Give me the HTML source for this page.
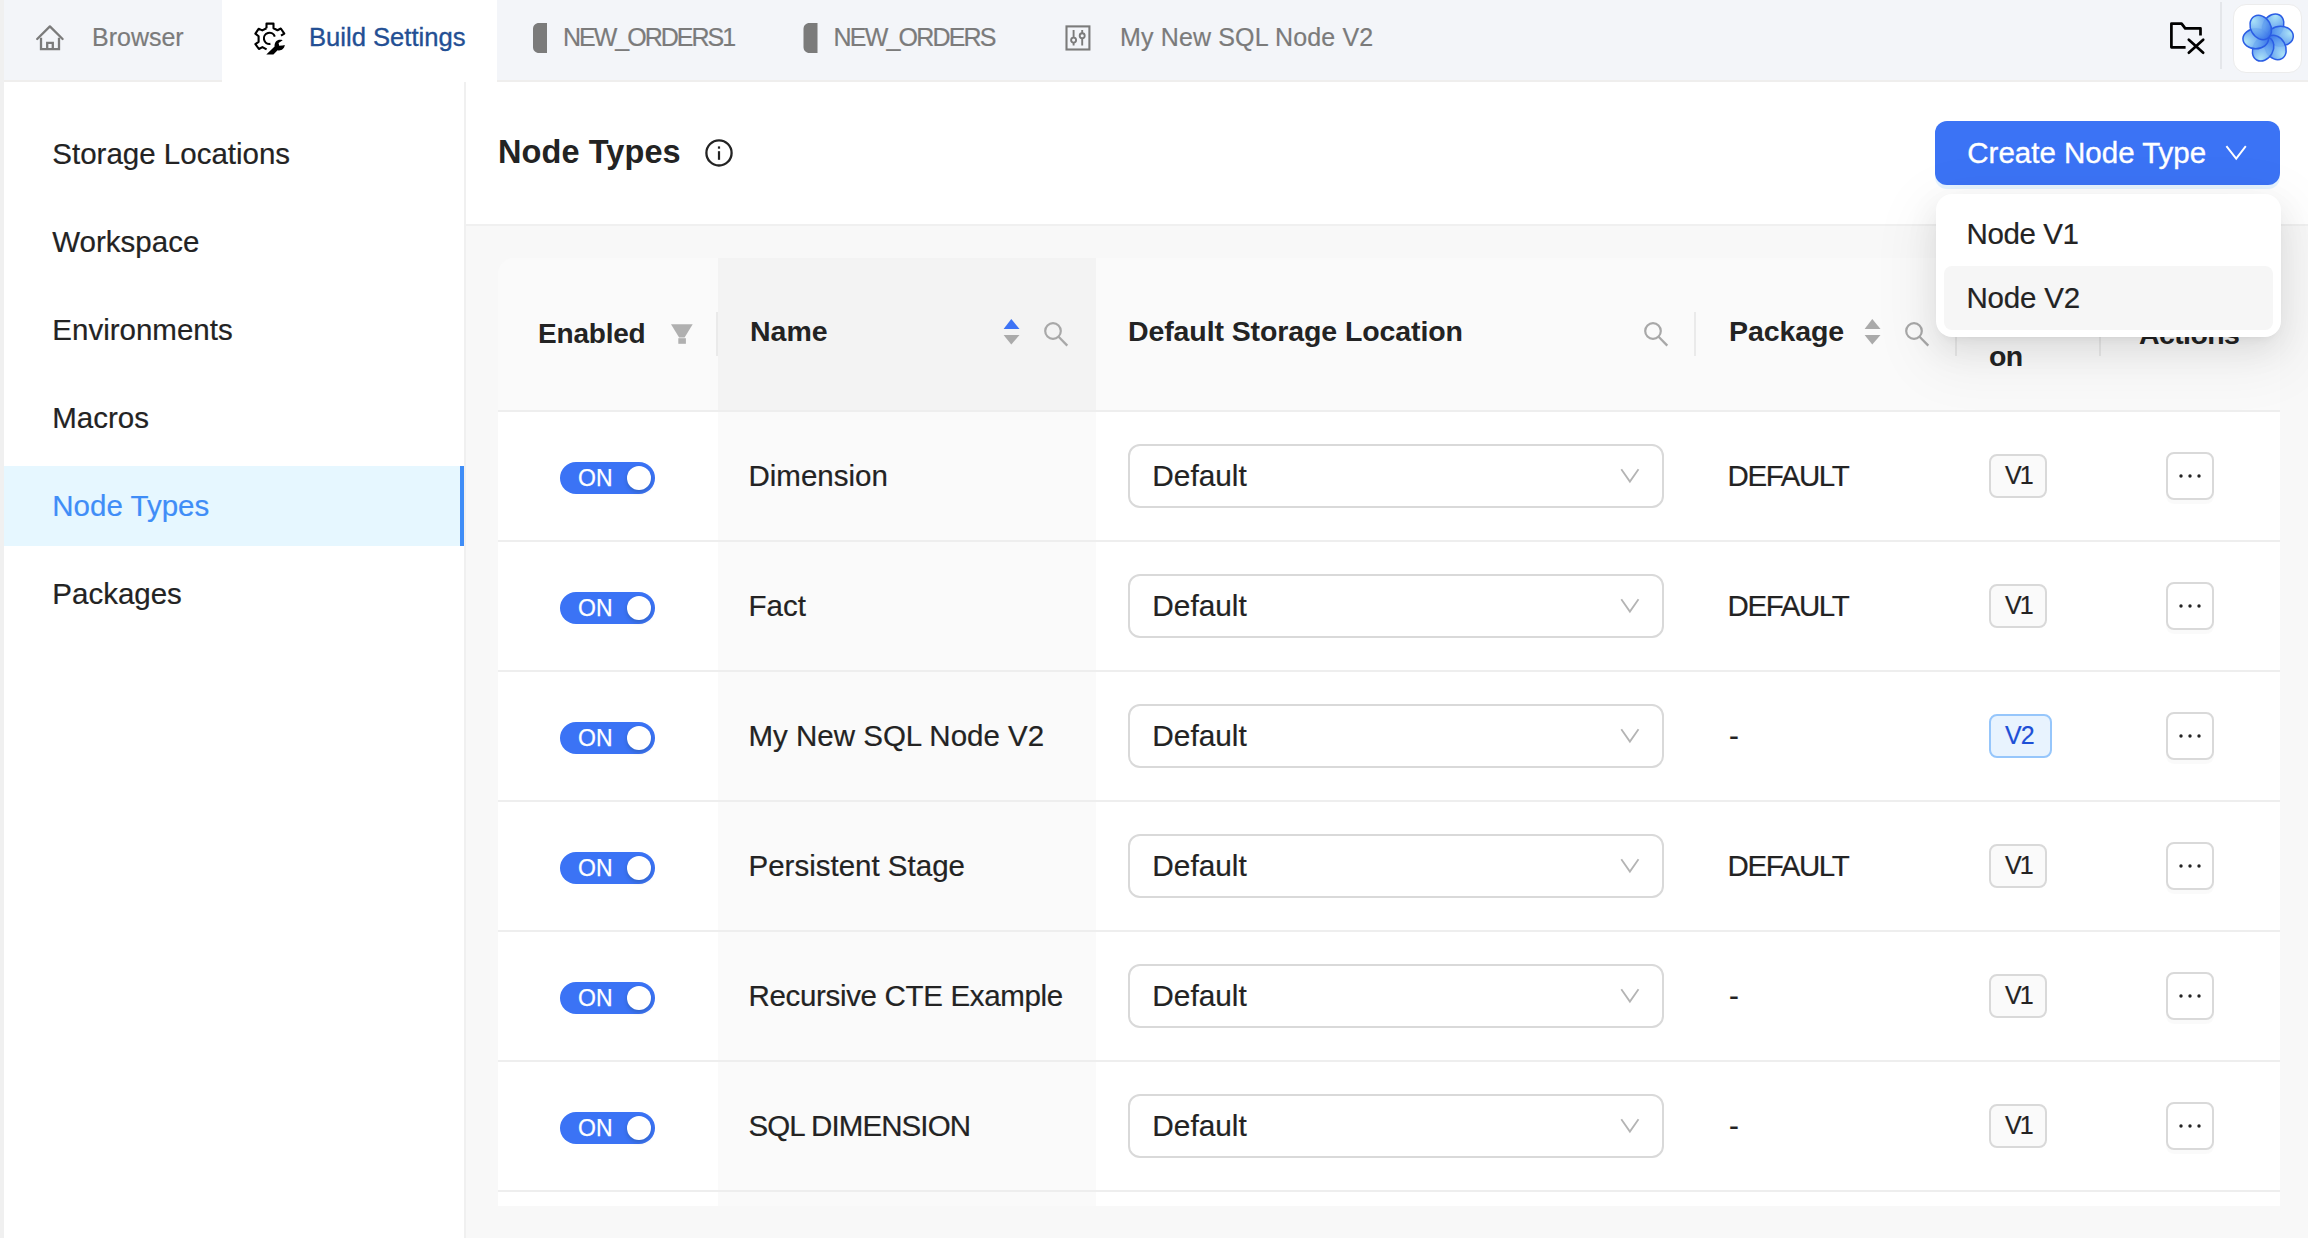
<!DOCTYPE html><html><head><meta charset="utf-8"><style>
html,body{margin:0;padding:0;}
body{width:2308px;height:1238px;overflow:hidden;position:relative;background:#fff;font-family:"Liberation Sans",sans-serif;}
.r{position:absolute;}
.t{position:absolute;white-space:nowrap;line-height:1;-webkit-text-stroke:0.2px currentColor;}
</style></head><body>
<div class="r" style="left:0px;top:0px;width:4px;height:1238px;background:#f0f0f0"></div>
<div class="r" style="left:4px;top:0px;width:2304px;height:80px;background:#f3f5f9"></div>
<div class="r" style="left:4px;top:80px;width:2304px;height:2px;background:#efeeed"></div>
<div class="r" style="left:222px;top:0px;width:275px;height:82px;background:#fff"></div>
<svg class="r" style="left:30px;top:18px;" width="40" height="40" viewBox="0 0 40 40"><path d="M7.2 21 L19.9 8.4 L32.6 21" fill="none" stroke="#7b7b7b" stroke-width="2.3" stroke-linecap="round" stroke-linejoin="round"/><path d="M11 19.8 V31.1 H29 V19.8" fill="none" stroke="#7b7b7b" stroke-width="2.3"/><path d="M17.2 31.1 V24.8 H22.8 V31.1" fill="none" stroke="#7b7b7b" stroke-width="2.3"/></svg>
<div class="t" style="left:92px;top:24.83px;font-size:25px;color:#7b7b7b;font-weight:400;letter-spacing:0px;">Browser</div>
<svg class="r" style="left:250px;top:18.6px;" width="40" height="40" viewBox="0 0 40 40"><path d="M16.5 9.2 V4.6 H23.5 V9.2 L27.5 11.2 L30.8 9.5 L34.3 14.6 L31.0 16.7" fill="none" stroke="#000" stroke-width="2.1" stroke-linejoin="round"/><path d="M16.5 9.2 L12.3 11.4 L8.6 9.8 L5.4 14.6 L8.6 17.3 V22.8 L5.4 25.2 L8.9 30.0 L12.4 28.1 L16.6 30.4" fill="none" stroke="#000" stroke-width="2.1" stroke-linejoin="round"/><path d="M24.8 17.6 A5.6 5.6 0 1 0 20.4 24.9" fill="none" stroke="#000" stroke-width="2.1"/><path d="M16.3 35.6 L24.6 27.4 C24.2 22.5 28.2 19.6 32.7 21.3 L28.6 24.0 L29.2 26.8 L32.6 26.6 L34.8 26.0 C34.2 30.5 30.6 32.0 27.6 31.2 L23.4 35.6 Z" fill="#000"/></svg>
<div class="t" style="left:309px;top:25.12px;font-size:25.6px;color:#234f94;font-weight:500;letter-spacing:0px;-webkit-text-stroke:0.35px #234f94;">Build Settings</div>
<svg class="r" style="left:530px;top:20px;" width="20" height="36" viewBox="0 0 20 36"><path d="M17 3 H9 C5.5 3 3 5.5 3 9 V27 C3 30.5 5.5 33 9 33 H17 Z" fill="#7b7b7b"/></svg>
<div class="t" style="left:563px;top:25.33px;font-size:25px;color:#7b7b7b;font-weight:400;letter-spacing:-2.0px;">NEW_ORDERS1</div>
<svg class="r" style="left:800px;top:20px;" width="20" height="36" viewBox="0 0 20 36"><path d="M17.5 3 H9.5 C6 3 3.5 5.5 3.5 9 V27 C3.5 30.5 6 33 9.5 33 H17.5 Z" fill="#7b7b7b"/></svg>
<div class="t" style="left:833.5px;top:25.33px;font-size:25px;color:#7b7b7b;font-weight:400;letter-spacing:-1.8px;">NEW_ORDERS</div>
<svg class="r" style="left:1062px;top:22px;" width="32" height="32" viewBox="0 0 32 32"><rect x="4.5" y="4.4" width="22.9" height="23.1" fill="none" stroke="#7b7b7b" stroke-width="2.1"/><path d="M11.6 8.1 V23.5 M20.2 8.1 V23.5" stroke="#7b7b7b" stroke-width="1.9"/><circle cx="11.6" cy="18.1" r="2.5" fill="#f3f5f9" stroke="#7b7b7b" stroke-width="1.9"/><circle cx="20.2" cy="13.7" r="2.5" fill="#f3f5f9" stroke="#7b7b7b" stroke-width="1.9"/></svg>
<div class="t" style="left:1120px;top:25.33px;font-size:25px;color:#7b7b7b;font-weight:400;letter-spacing:0.15px;">My New SQL Node V2</div>
<svg class="r" style="left:2166px;top:18px;" width="42" height="42" viewBox="0 0 42 42"><path d="M19.6 29.3 H5.4 V5.6 H15.6 L19.2 10.4 H34.5 V17.6" fill="none" stroke="#000" stroke-width="2.7" stroke-linejoin="round"/><path d="M22.8 21.7 L37.2 34.7 M37.2 21.7 L22.8 34.7" stroke="#000" stroke-width="2.7" stroke-linecap="round"/></svg>
<div class="r" style="left:2220px;top:2px;width:2px;height:67px;background:#e4e6ea"></div>
<div class="r" style="left:2233px;top:4px;width:69px;height:69px;background:#fff;border:1px solid #ececec;border-radius:13px;box-sizing:border-box"></div>
<svg class="r" style="left:2240px;top:8px;" width="56" height="58" viewBox="0 0 56 58"><defs><radialGradient id="lg" cx="0.35" cy="0.1" r="1.0"><stop offset="0" stop-color="#a6e2f7"/><stop offset="0.6" stop-color="#5e9cef"/><stop offset="1" stop-color="#2f68e6"/></radialGradient></defs><g transform="rotate(0 28.1 29.5)"><ellipse cx="33.1" cy="18.1" rx="10.0" ry="12.8" transform="rotate(30 33.1 18.1)" fill="url(#lg)" fill-opacity="0.93" stroke="#2b5de4" stroke-width="1.5"/></g><g transform="rotate(60 28.1 29.5)"><ellipse cx="33.1" cy="18.1" rx="10.0" ry="12.8" transform="rotate(30 33.1 18.1)" fill="url(#lg)" fill-opacity="0.93" stroke="#2b5de4" stroke-width="1.5"/></g><g transform="rotate(120 28.1 29.5)"><ellipse cx="33.1" cy="18.1" rx="10.0" ry="12.8" transform="rotate(30 33.1 18.1)" fill="url(#lg)" fill-opacity="0.93" stroke="#2b5de4" stroke-width="1.5"/></g><g transform="rotate(180 28.1 29.5)"><ellipse cx="33.1" cy="18.1" rx="10.0" ry="12.8" transform="rotate(30 33.1 18.1)" fill="url(#lg)" fill-opacity="0.93" stroke="#2b5de4" stroke-width="1.5"/></g><g transform="rotate(240 28.1 29.5)"><ellipse cx="33.1" cy="18.1" rx="10.0" ry="12.8" transform="rotate(30 33.1 18.1)" fill="url(#lg)" fill-opacity="0.93" stroke="#2b5de4" stroke-width="1.5"/></g><g transform="rotate(300 28.1 29.5)"><ellipse cx="33.1" cy="18.1" rx="10.0" ry="12.8" transform="rotate(30 33.1 18.1)" fill="url(#lg)" fill-opacity="0.93" stroke="#2b5de4" stroke-width="1.5"/></g></svg>
<div class="r" style="left:4px;top:82px;width:460px;height:1156px;background:#fff"></div>
<div class="r" style="left:464px;top:82px;width:2px;height:1156px;background:#f0f0f0"></div>
<div class="r" style="left:4px;top:466px;width:456px;height:80px;background:#e6f7ff"></div>
<div class="r" style="left:460px;top:466px;width:4px;height:80px;background:#3f8df7"></div>
<div class="t" style="left:52.3px;top:138.82px;font-size:29.5px;color:#232323;font-weight:400;letter-spacing:0px;">Storage Locations</div>
<div class="t" style="left:52.3px;top:226.82px;font-size:29.5px;color:#232323;font-weight:400;letter-spacing:0px;">Workspace</div>
<div class="t" style="left:52.3px;top:314.82px;font-size:29.5px;color:#232323;font-weight:400;letter-spacing:0px;">Environments</div>
<div class="t" style="left:52.3px;top:402.82px;font-size:29.5px;color:#232323;font-weight:400;letter-spacing:0px;">Macros</div>
<div class="t" style="left:52.3px;top:490.82px;font-size:29.5px;color:#3f8df7;font-weight:400;letter-spacing:0px;">Node Types</div>
<div class="t" style="left:52.3px;top:578.82px;font-size:29.5px;color:#232323;font-weight:400;letter-spacing:0px;">Packages</div>
<div class="r" style="left:466px;top:82px;width:1842px;height:142px;background:#fff"></div>
<div class="r" style="left:466px;top:224px;width:1842px;height:2px;background:#f0f0f0"></div>
<div class="r" style="left:466px;top:226px;width:1842px;height:1012px;background:#f8f8f8"></div>
<div class="t" style="left:498px;top:136.38px;font-size:32.5px;color:#232323;font-weight:700;letter-spacing:0.1px;-webkit-text-stroke:0;">Node Types</div>
<svg class="r" style="left:702px;top:137px;" width="32" height="32" viewBox="0 0 32 32"><circle cx="17" cy="15.9" r="12.6" fill="none" stroke="#232323" stroke-width="2.3"/><rect x="15.9" y="14.2" width="2.2" height="8.6" fill="#232323"/><rect x="15.9" y="9.4" width="2.2" height="2.3" fill="#232323"/></svg>
<div class="r" style="left:498px;top:258px;width:1782px;height:152px;background:#fafafa;border-radius:16px 16px 0 0"></div>
<div class="r" style="left:718px;top:258px;width:378px;height:152px;background:#f3f3f3"></div>
<div class="r" style="left:498px;top:410px;width:1782px;height:2px;background:#eeeeee"></div>
<div class="r" style="left:716px;top:312px;width:2px;height:44px;background:#eaeaea"></div>
<div class="r" style="left:1694px;top:312px;width:2px;height:44px;background:#eaeaea"></div>
<div class="r" style="left:1955px;top:312px;width:2px;height:44px;background:#eaeaea"></div>
<div class="r" style="left:2099px;top:312px;width:2px;height:44px;background:#eaeaea"></div>
<div class="t" style="left:538px;top:320.29px;font-size:28px;color:#232323;font-weight:700;letter-spacing:-0.2px;-webkit-text-stroke:0;">Enabled</div>
<svg class="r" style="left:668px;top:321px;" width="28" height="26" viewBox="0 0 28 26"><path d="M3 3.3 H24.7 L16.6 16.4 H11.1 Z" fill="#b0b0b0"/><rect x="10.3" y="17.2" width="7.6" height="5.6" fill="#b0b0b0"/></svg>
<div class="t" style="left:750px;top:317.47px;font-size:28.5px;color:#232323;font-weight:700;letter-spacing:0px;-webkit-text-stroke:0;">Name</div>
<svg class="r" style="left:1001px;top:316px;" width="20" height="32" viewBox="0 0 20 32"><path d="M2.6 13 L10.3 3 L18.5 13 Z" fill="#3d73f5"/><path d="M2.6 19 L18.5 19 L10.3 28.5 Z" fill="#aaaaaa"/></svg>
<svg class="r" style="left:1039px;top:316.7px;" width="30" height="32" viewBox="0 0 30 32"><circle cx="14" cy="14" r="7.8" fill="none" stroke="#a8a8a8" stroke-width="2.2"/><path d="M19.6 19.8 L28.3 28.6" stroke="#a8a8a8" stroke-width="2.3"/></svg>
<div class="t" style="left:1128px;top:317.37px;font-size:28.5px;color:#232323;font-weight:700;letter-spacing:-0.1px;-webkit-text-stroke:0;">Default Storage Location</div>
<svg class="r" style="left:1638.5px;top:316.7px;" width="30" height="32" viewBox="0 0 30 32"><circle cx="14" cy="14" r="7.8" fill="none" stroke="#a8a8a8" stroke-width="2.2"/><path d="M19.6 19.8 L28.3 28.6" stroke="#a8a8a8" stroke-width="2.3"/></svg>
<div class="t" style="left:1729px;top:317.37px;font-size:28.5px;color:#232323;font-weight:700;letter-spacing:-0.1px;-webkit-text-stroke:0;">Package</div>
<svg class="r" style="left:1862px;top:316px;" width="20" height="32" viewBox="0 0 20 32"><path d="M2.6 13 L10.3 3 L18.5 13 Z" fill="#aaaaaa"/><path d="M2.6 19 L18.5 19 L10.3 28.5 Z" fill="#aaaaaa"/></svg>
<svg class="r" style="left:1900px;top:316.7px;" width="30" height="32" viewBox="0 0 30 32"><circle cx="14" cy="14" r="7.8" fill="none" stroke="#a8a8a8" stroke-width="2.2"/><path d="M19.6 19.8 L28.3 28.6" stroke="#a8a8a8" stroke-width="2.3"/></svg>
<div class="t" style="left:1989px;top:342.17px;font-size:28.5px;color:#232323;font-weight:700;letter-spacing:-0.6px;-webkit-text-stroke:0;">on</div>
<div class="t" style="left:2139px;top:320.37px;font-size:28.5px;color:#232323;font-weight:700;letter-spacing:-0.6px;-webkit-text-stroke:0;">Actions</div>
<div class="r" style="left:498px;top:412px;width:1782px;height:128px;background:#fff"></div>
<div class="r" style="left:718px;top:412px;width:378px;height:128px;background:#fafafa"></div>
<div class="r" style="left:498px;top:540px;width:1782px;height:2px;background:#eeeeee"></div>
<div class="r" style="left:560px;top:462px;width:95px;height:32px;background:#3b73f5;border-radius:16px"></div>
<div class="t" style="left:578px;top:467.03px;font-size:23px;color:#fff;font-weight:400;letter-spacing:0px;-webkit-text-stroke:0.25px #fff;">ON</div>
<div class="r" style="left:627px;top:466px;width:24px;height:24px;background:#fff;border-radius:50%;box-shadow:0 2px 4px rgba(0,35,11,0.2)"></div>
<div class="t" style="left:748.5px;top:461.22px;font-size:29.5px;color:#232323;font-weight:400;letter-spacing:0px;">Dimension</div>
<div class="r" style="left:1128px;top:444px;width:536px;height:64px;background:#fff;border:2px solid #d9d9d9;border-radius:12px;box-sizing:border-box"></div>
<div class="t" style="left:1152.3px;top:460.77px;font-size:29.8px;color:#232323;font-weight:400;letter-spacing:0px;">Default</div>
<svg class="r" style="left:1616px;top:462px;" width="28" height="28" viewBox="0 0 28 28"><path d="M5.3 7.3 L13.9 19.6 L22.5 7.3" fill="none" stroke="#b4b4b4" stroke-width="1.8"/></svg>
<div class="t" style="left:1727.5px;top:461.02px;font-size:29.5px;color:#232323;font-weight:400;letter-spacing:-1.4px;">DEFAULT</div>
<div class="r" style="left:1989px;top:454px;width:58px;height:44px;background:#fafafa;border:2px solid #d9d9d9;border-radius:8px;box-sizing:border-box"></div>
<div class="t" style="left:2005px;top:463.33px;font-size:25px;color:#232323;font-weight:400;letter-spacing:-2px;">V1</div>
<div class="r" style="left:2166px;top:452px;width:48px;height:48px;background:#fff;border:2px solid #d9d9d9;border-radius:8px;box-sizing:border-box;box-shadow:0 4px 0 rgba(0,0,0,0.02)"></div>
<svg class="r" style="left:2176px;top:460px;" width="28" height="28" viewBox="0 0 28 28"><circle cx="5" cy="16" r="1.7" fill="#232323"/><circle cx="14" cy="16" r="1.7" fill="#232323"/><circle cx="23" cy="16" r="1.7" fill="#232323"/></svg>
<div class="r" style="left:498px;top:542px;width:1782px;height:128px;background:#fff"></div>
<div class="r" style="left:718px;top:542px;width:378px;height:128px;background:#fafafa"></div>
<div class="r" style="left:498px;top:670px;width:1782px;height:2px;background:#eeeeee"></div>
<div class="r" style="left:560px;top:592px;width:95px;height:32px;background:#3b73f5;border-radius:16px"></div>
<div class="t" style="left:578px;top:597.03px;font-size:23px;color:#fff;font-weight:400;letter-spacing:0px;-webkit-text-stroke:0.25px #fff;">ON</div>
<div class="r" style="left:627px;top:596px;width:24px;height:24px;background:#fff;border-radius:50%;box-shadow:0 2px 4px rgba(0,35,11,0.2)"></div>
<div class="t" style="left:748.5px;top:591.22px;font-size:29.5px;color:#232323;font-weight:400;letter-spacing:0px;">Fact</div>
<div class="r" style="left:1128px;top:574px;width:536px;height:64px;background:#fff;border:2px solid #d9d9d9;border-radius:12px;box-sizing:border-box"></div>
<div class="t" style="left:1152.3px;top:590.77px;font-size:29.8px;color:#232323;font-weight:400;letter-spacing:0px;">Default</div>
<svg class="r" style="left:1616px;top:592px;" width="28" height="28" viewBox="0 0 28 28"><path d="M5.3 7.3 L13.9 19.6 L22.5 7.3" fill="none" stroke="#b4b4b4" stroke-width="1.8"/></svg>
<div class="t" style="left:1727.5px;top:591.02px;font-size:29.5px;color:#232323;font-weight:400;letter-spacing:-1.4px;">DEFAULT</div>
<div class="r" style="left:1989px;top:584px;width:58px;height:44px;background:#fafafa;border:2px solid #d9d9d9;border-radius:8px;box-sizing:border-box"></div>
<div class="t" style="left:2005px;top:593.33px;font-size:25px;color:#232323;font-weight:400;letter-spacing:-2px;">V1</div>
<div class="r" style="left:2166px;top:582px;width:48px;height:48px;background:#fff;border:2px solid #d9d9d9;border-radius:8px;box-sizing:border-box;box-shadow:0 4px 0 rgba(0,0,0,0.02)"></div>
<svg class="r" style="left:2176px;top:590px;" width="28" height="28" viewBox="0 0 28 28"><circle cx="5" cy="16" r="1.7" fill="#232323"/><circle cx="14" cy="16" r="1.7" fill="#232323"/><circle cx="23" cy="16" r="1.7" fill="#232323"/></svg>
<div class="r" style="left:498px;top:672px;width:1782px;height:128px;background:#fff"></div>
<div class="r" style="left:718px;top:672px;width:378px;height:128px;background:#fafafa"></div>
<div class="r" style="left:498px;top:800px;width:1782px;height:2px;background:#eeeeee"></div>
<div class="r" style="left:560px;top:722px;width:95px;height:32px;background:#3b73f5;border-radius:16px"></div>
<div class="t" style="left:578px;top:727.03px;font-size:23px;color:#fff;font-weight:400;letter-spacing:0px;-webkit-text-stroke:0.25px #fff;">ON</div>
<div class="r" style="left:627px;top:726px;width:24px;height:24px;background:#fff;border-radius:50%;box-shadow:0 2px 4px rgba(0,35,11,0.2)"></div>
<div class="t" style="left:748.5px;top:721.22px;font-size:29.5px;color:#232323;font-weight:400;letter-spacing:0px;">My New SQL Node V2</div>
<div class="r" style="left:1128px;top:704px;width:536px;height:64px;background:#fff;border:2px solid #d9d9d9;border-radius:12px;box-sizing:border-box"></div>
<div class="t" style="left:1152.3px;top:720.77px;font-size:29.8px;color:#232323;font-weight:400;letter-spacing:0px;">Default</div>
<svg class="r" style="left:1616px;top:722px;" width="28" height="28" viewBox="0 0 28 28"><path d="M5.3 7.3 L13.9 19.6 L22.5 7.3" fill="none" stroke="#b4b4b4" stroke-width="1.8"/></svg>
<div class="t" style="left:1729px;top:721.02px;font-size:29.5px;color:#232323;font-weight:400;letter-spacing:0px;">-</div>
<div class="r" style="left:1989px;top:714px;width:63px;height:44px;background:#e8f3fe;border:2px solid #96c6fb;border-radius:8px;box-sizing:border-box"></div>
<div class="t" style="left:2005px;top:722.73px;font-size:25px;color:#1d4fd6;font-weight:400;letter-spacing:-1px;">V2</div>
<div class="r" style="left:2166px;top:712px;width:48px;height:48px;background:#fff;border:2px solid #d9d9d9;border-radius:8px;box-sizing:border-box;box-shadow:0 4px 0 rgba(0,0,0,0.02)"></div>
<svg class="r" style="left:2176px;top:720px;" width="28" height="28" viewBox="0 0 28 28"><circle cx="5" cy="16" r="1.7" fill="#232323"/><circle cx="14" cy="16" r="1.7" fill="#232323"/><circle cx="23" cy="16" r="1.7" fill="#232323"/></svg>
<div class="r" style="left:498px;top:802px;width:1782px;height:128px;background:#fff"></div>
<div class="r" style="left:718px;top:802px;width:378px;height:128px;background:#fafafa"></div>
<div class="r" style="left:498px;top:930px;width:1782px;height:2px;background:#eeeeee"></div>
<div class="r" style="left:560px;top:852px;width:95px;height:32px;background:#3b73f5;border-radius:16px"></div>
<div class="t" style="left:578px;top:857.03px;font-size:23px;color:#fff;font-weight:400;letter-spacing:0px;-webkit-text-stroke:0.25px #fff;">ON</div>
<div class="r" style="left:627px;top:856px;width:24px;height:24px;background:#fff;border-radius:50%;box-shadow:0 2px 4px rgba(0,35,11,0.2)"></div>
<div class="t" style="left:748.5px;top:851.22px;font-size:29.5px;color:#232323;font-weight:400;letter-spacing:0px;">Persistent Stage</div>
<div class="r" style="left:1128px;top:834px;width:536px;height:64px;background:#fff;border:2px solid #d9d9d9;border-radius:12px;box-sizing:border-box"></div>
<div class="t" style="left:1152.3px;top:850.77px;font-size:29.8px;color:#232323;font-weight:400;letter-spacing:0px;">Default</div>
<svg class="r" style="left:1616px;top:852px;" width="28" height="28" viewBox="0 0 28 28"><path d="M5.3 7.3 L13.9 19.6 L22.5 7.3" fill="none" stroke="#b4b4b4" stroke-width="1.8"/></svg>
<div class="t" style="left:1727.5px;top:851.02px;font-size:29.5px;color:#232323;font-weight:400;letter-spacing:-1.4px;">DEFAULT</div>
<div class="r" style="left:1989px;top:844px;width:58px;height:44px;background:#fafafa;border:2px solid #d9d9d9;border-radius:8px;box-sizing:border-box"></div>
<div class="t" style="left:2005px;top:853.33px;font-size:25px;color:#232323;font-weight:400;letter-spacing:-2px;">V1</div>
<div class="r" style="left:2166px;top:842px;width:48px;height:48px;background:#fff;border:2px solid #d9d9d9;border-radius:8px;box-sizing:border-box;box-shadow:0 4px 0 rgba(0,0,0,0.02)"></div>
<svg class="r" style="left:2176px;top:850px;" width="28" height="28" viewBox="0 0 28 28"><circle cx="5" cy="16" r="1.7" fill="#232323"/><circle cx="14" cy="16" r="1.7" fill="#232323"/><circle cx="23" cy="16" r="1.7" fill="#232323"/></svg>
<div class="r" style="left:498px;top:932px;width:1782px;height:128px;background:#fff"></div>
<div class="r" style="left:718px;top:932px;width:378px;height:128px;background:#fafafa"></div>
<div class="r" style="left:498px;top:1060px;width:1782px;height:2px;background:#eeeeee"></div>
<div class="r" style="left:560px;top:982px;width:95px;height:32px;background:#3b73f5;border-radius:16px"></div>
<div class="t" style="left:578px;top:987.03px;font-size:23px;color:#fff;font-weight:400;letter-spacing:0px;-webkit-text-stroke:0.25px #fff;">ON</div>
<div class="r" style="left:627px;top:986px;width:24px;height:24px;background:#fff;border-radius:50%;box-shadow:0 2px 4px rgba(0,35,11,0.2)"></div>
<div class="t" style="left:748.5px;top:981.22px;font-size:29.5px;color:#232323;font-weight:400;letter-spacing:-0.33px;">Recursive CTE Example</div>
<div class="r" style="left:1128px;top:964px;width:536px;height:64px;background:#fff;border:2px solid #d9d9d9;border-radius:12px;box-sizing:border-box"></div>
<div class="t" style="left:1152.3px;top:980.77px;font-size:29.8px;color:#232323;font-weight:400;letter-spacing:0px;">Default</div>
<svg class="r" style="left:1616px;top:982px;" width="28" height="28" viewBox="0 0 28 28"><path d="M5.3 7.3 L13.9 19.6 L22.5 7.3" fill="none" stroke="#b4b4b4" stroke-width="1.8"/></svg>
<div class="t" style="left:1729px;top:981.02px;font-size:29.5px;color:#232323;font-weight:400;letter-spacing:0px;">-</div>
<div class="r" style="left:1989px;top:974px;width:58px;height:44px;background:#fafafa;border:2px solid #d9d9d9;border-radius:8px;box-sizing:border-box"></div>
<div class="t" style="left:2005px;top:983.33px;font-size:25px;color:#232323;font-weight:400;letter-spacing:-2px;">V1</div>
<div class="r" style="left:2166px;top:972px;width:48px;height:48px;background:#fff;border:2px solid #d9d9d9;border-radius:8px;box-sizing:border-box;box-shadow:0 4px 0 rgba(0,0,0,0.02)"></div>
<svg class="r" style="left:2176px;top:980px;" width="28" height="28" viewBox="0 0 28 28"><circle cx="5" cy="16" r="1.7" fill="#232323"/><circle cx="14" cy="16" r="1.7" fill="#232323"/><circle cx="23" cy="16" r="1.7" fill="#232323"/></svg>
<div class="r" style="left:498px;top:1062px;width:1782px;height:128px;background:#fff"></div>
<div class="r" style="left:718px;top:1062px;width:378px;height:128px;background:#fafafa"></div>
<div class="r" style="left:498px;top:1190px;width:1782px;height:2px;background:#eeeeee"></div>
<div class="r" style="left:560px;top:1112px;width:95px;height:32px;background:#3b73f5;border-radius:16px"></div>
<div class="t" style="left:578px;top:1117.03px;font-size:23px;color:#fff;font-weight:400;letter-spacing:0px;-webkit-text-stroke:0.25px #fff;">ON</div>
<div class="r" style="left:627px;top:1116px;width:24px;height:24px;background:#fff;border-radius:50%;box-shadow:0 2px 4px rgba(0,35,11,0.2)"></div>
<div class="t" style="left:748.5px;top:1111.22px;font-size:29.5px;color:#232323;font-weight:400;letter-spacing:-0.9px;">SQL DIMENSION</div>
<div class="r" style="left:1128px;top:1094px;width:536px;height:64px;background:#fff;border:2px solid #d9d9d9;border-radius:12px;box-sizing:border-box"></div>
<div class="t" style="left:1152.3px;top:1110.77px;font-size:29.8px;color:#232323;font-weight:400;letter-spacing:0px;">Default</div>
<svg class="r" style="left:1616px;top:1112px;" width="28" height="28" viewBox="0 0 28 28"><path d="M5.3 7.3 L13.9 19.6 L22.5 7.3" fill="none" stroke="#b4b4b4" stroke-width="1.8"/></svg>
<div class="t" style="left:1729px;top:1111.02px;font-size:29.5px;color:#232323;font-weight:400;letter-spacing:0px;">-</div>
<div class="r" style="left:1989px;top:1104px;width:58px;height:44px;background:#fafafa;border:2px solid #d9d9d9;border-radius:8px;box-sizing:border-box"></div>
<div class="t" style="left:2005px;top:1113.33px;font-size:25px;color:#232323;font-weight:400;letter-spacing:-2px;">V1</div>
<div class="r" style="left:2166px;top:1102px;width:48px;height:48px;background:#fff;border:2px solid #d9d9d9;border-radius:8px;box-sizing:border-box;box-shadow:0 4px 0 rgba(0,0,0,0.02)"></div>
<svg class="r" style="left:2176px;top:1110px;" width="28" height="28" viewBox="0 0 28 28"><circle cx="5" cy="16" r="1.7" fill="#232323"/><circle cx="14" cy="16" r="1.7" fill="#232323"/><circle cx="23" cy="16" r="1.7" fill="#232323"/></svg>
<div class="r" style="left:498px;top:1192px;width:1782px;height:14px;background:#fff"></div>
<div class="r" style="left:718px;top:1192px;width:378px;height:14px;background:#fafafa"></div>
<div class="r" style="left:466px;top:1206px;width:1842px;height:32px;background:#f8f8f8"></div>
<div class="r" style="left:1935px;top:121px;width:345px;height:64px;background:#3b73f5;border-radius:12px;box-shadow:0 4px 0 rgba(5,145,255,0.1)"></div>
<div class="t" style="left:1967.3px;top:137.62px;font-size:29.5px;color:#fff;font-weight:400;letter-spacing:0px;-webkit-text-stroke:0.35px #fff;">Create Node Type</div>
<svg class="r" style="left:2222px;top:140px;" width="28" height="24" viewBox="0 0 28 24"><path d="M4.4 6.2 L14.2 18.6 L23.8 6.2" fill="none" stroke="#fff" stroke-width="1.9"/></svg>
<div class="r" style="left:1936px;top:194px;width:345px;height:143px;background:#fff;border-radius:16px;box-shadow:0 12px 32px 0 rgba(0,0,0,0.08),0 6px 12px -8px rgba(0,0,0,0.12),0 18px 56px 16px rgba(0,0,0,0.05)"></div>
<div class="r" style="left:1944px;top:266px;width:329px;height:64px;background:#f6f6f6;border-radius:8px"></div>
<div class="t" style="left:1966.5px;top:219.02px;font-size:29.5px;color:#232323;font-weight:400;letter-spacing:-0.4px;">Node V1</div>
<div class="t" style="left:1966.5px;top:283.02px;font-size:29.5px;color:#232323;font-weight:400;letter-spacing:-0.2px;">Node V2</div>
</body></html>
